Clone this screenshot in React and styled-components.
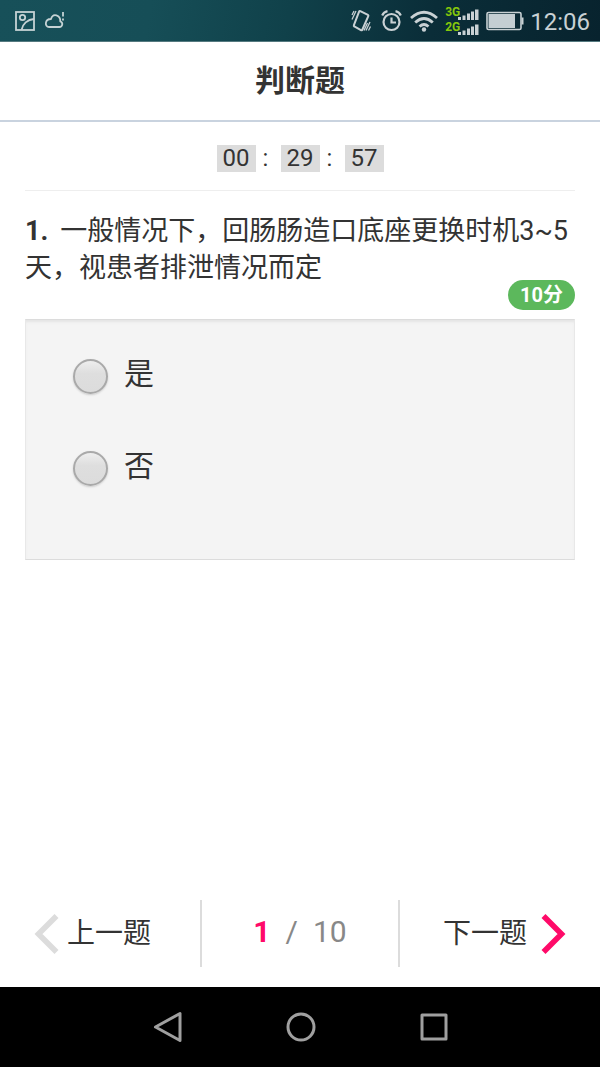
import { useState } from 'react';
import styled, { createGlobalStyle } from 'styled-components';

const GlobalStyle = createGlobalStyle`
  * {
    box-sizing: border-box;
  }

  body {
    margin: 0;
    background: #fff;
    color: #333;
    font-family: Roboto, 'Noto Sans CJK SC', sans-serif;
  }

  button, input {
    font-family: inherit;
  }
`;

const Screen = styled.div`
  display: flex;
  flex-direction: column;
  min-height: 100vh;
`;

const StatusBar = styled.div`
  display: flex;
  justify-content: space-between;
  align-items: center;
  height: 42px;
  padding: 0 10px 0 14px;
  border-bottom: 1px solid #557a80;
  background: linear-gradient(100deg, #175059 0%, #164e57 25%, #10414a 48%, #0a2d38 72%, #08232e 100%);
  color: #c9d1d4;
`;

const StatusGroup = styled.div`
  display: flex;
  align-items: center;
  gap: ${props => props.gap};
`;

const Clock = styled.time`
  font-size: 24px;
  line-height: 28px;
  padding-top: 2px;
`;

const Networks = styled.div`
  display: grid;
  grid-template-columns: 13px 22px;
  align-items: end;
`;

const NetworkName = styled.span`
  font-size: 12px;
  line-height: 12px;
  height: 15px;
  font-weight: 700;
  color: #86c80b;
`;

const Header = styled.header`
  height: 80px;
  border-bottom: 2px solid #c9d3df;
  text-align: center;
`;

const Title = styled.h1`
  margin: 0;
  font-size: 30px;
  line-height: 77px;
  font-weight: 700;
`;

const Main = styled.main`
  flex: 1;
  padding: 0 25px;
`;

const Timer = styled.div`
  display: flex;
  justify-content: center;
  height: 69px;
  padding-top: 23px;
  border-bottom: 1px solid #eee;
  font-size: 24px;
  line-height: 26px;
`;

const Digits = styled.span`
  width: 39px;
  height: 27px;
  background: #dcdcdc;
  text-align: center;
`;

const Colon = styled.span`
  width: 25px;
  padding-right: 5px;
  text-align: center;
`;

const Question = styled.div`
  position: relative;
  padding: 22px 0 32px;
`;

const QuestionText = styled.p`
  margin: 0;
  font-size: 27px;
  line-height: 37px;
`;

const Number = styled.b`
  margin-right: 12px;
`;

const Score = styled.span`
  position: absolute;
  right: 0;
  bottom: 9px;
  height: 30px;
  padding: 0 12px;
  border-radius: 15px;
  background: #5cb85c;
  color: #fff;
  font-size: 20px;
  line-height: 30px;
  font-weight: 700;
`;

const Options = styled.fieldset`
  display: flex;
  flex-direction: column;
  gap: 48px;
  margin: 0;
  padding: 32px 47px 71px;
  border: 1px solid #e8e8e8;
  border-top-color: #dcdcdc;
  border-bottom-color: #dcdcdc;
  background: #f4f4f4;
  box-shadow: inset 0 3px 3px -1px #e4e4e4;
`;

const Option = styled.label`
  display: flex;
  align-items: center;
  gap: 16px;
  height: 44px;
  font-size: 30px;
  line-height: 40px;
  cursor: pointer;
`;

const Radio = styled.input`
  appearance: none;
  width: 35px;
  height: 35px;
  margin: 4px 0 0;
  border: 2px solid #a9a9a9;
  border-radius: 50%;
  background: linear-gradient(#eee 0%, #dedede 40%, #dcdcdc 100%);
  box-shadow: 0 1px 2px #ccc;

  &:checked {
    background: radial-gradient(#ff0a69 35%, #dedede 40%);
  }
`;

const Pager = styled.nav`
  display: grid;
  grid-template-columns: 1fr 1fr 1fr;
  height: 67px;
  margin-bottom: 20px;
`;

const PagerButton = styled.button`
  display: flex;
  align-items: center;
  justify-content: ${props => props.side};
  gap: ${props => props.gap};
  padding: 0 34px;
  border: 0;
  background: none;
  color: #333;
  font-size: 28px;
  line-height: 40px;
  white-space: nowrap;
  cursor: pointer;
`;

const Counter = styled.div`
  display: flex;
  justify-content: center;
  gap: 15px;
  border: solid #dcdcdc;
  border-width: 0 2px;
  color: #888;
  font-size: 30px;
  line-height: 63px;
`;

const Current = styled.b`
  color: #ff0a69;
`;

const SystemNav = styled.div`
  display: flex;
  justify-content: center;
  align-items: center;
  gap: 101px;
  height: 80px;
  padding-left: 2px;
  background: #000;
`;

const SystemButton = styled.button`
  display: flex;
  padding: 0;
  border: 0;
  background: none;
  cursor: pointer;
`;

const Signal = () => (
  <svg width="21" height="13" viewBox="0 0 21 13" fill="#c9d1d4">
    <rect x="0" y="9" width="3" height="3" />
    <rect x="4.5" y="7.5" width="3" height="4.5" />
    <rect x="9" y="5.5" width="3" height="6.5" />
    <rect x="13" y="3.5" width="3" height="8.5" />
    <rect x="17" y="1.5" width="3.5" height="10.5" />
  </svg>
);

const PictureIcon = () => (
  <svg width="22" height="22" viewBox="0 0 22 22" fill="none" stroke="#c5d2d4" strokeWidth="1.8">
    <rect x="2" y="2" width="18" height="18" />
    <circle cx="8.5" cy="7.5" r="2.7" />
    <path d="M7.5 20c1-6 6-10.5 12.5-11" />
  </svg>
);

const WeatherIcon = () => (
  <svg width="22" height="22" viewBox="0 0 22 22" fill="none" stroke="#c5d2d4" strokeWidth="1.8">
    <path d="M5 17h10.500c3 0 4-4.500.8-5.500C16.500 5 9 2.500 7 9 .5 9 .5 17 5 17z" strokeLinejoin="round" />
    <path d="M19 2v4.500M19 8.500v2" />
  </svg>
);

const VibrateIcon = () => (
  <svg width="24" height="24" viewBox="0 0 24 24" fill="none" stroke="#c9d1d4" strokeWidth="2">
    <path d="M9.300 2.200l7.600 3.600q.8.500.4 1.400l-6 13.500q-.5 1-1.400.5L3.300 17.500q-.8-.4-.4-1.400L8 2.800q.4-.9 1.300-.6z" />
    <path d="M1 10.500L5 2M1 6L3 2M15 21.500L19 13M17.500 21.500L19.500 17.500M13 21.500l3.500-7.500" strokeWidth="1.3" />
  </svg>
);

const AlarmIcon = () => (
  <svg width="22" height="24" viewBox="0 0 22 24" fill="none" stroke="#c9d1d4" strokeWidth="2.2">
    <circle cx="10.500" cy="13" r="8" />
    <path d="M10.500 8.500v5h4.500M1.200 6.500C2 4.500 4 2.700 6.500 2.200M19.800 6.500c-.8-2-2.800-3.800-5.300-4.300" />
  </svg>
);

const WifiIcon = () => (
  <svg width="30" height="24" viewBox="0 0 30 24" fill="none" stroke="#c9d1d4" strokeWidth="2.8">
    <path d="M2 9q13-11.500 26 0M6.200 13.500q8.800-8 17.600 0M10.500 17.500q4.500-4 9 0" />
    <circle cx="15" cy="20.500" r="2.2" fill="#c9d1d4" stroke="none" />
  </svg>
);

const BatteryIcon = () => (
  <svg width="38" height="20" viewBox="0 0 38 20">
    <rect x="1" y="1.500" width="34" height="17" rx="1.500" fill="none" stroke="#c9d1d4" strokeWidth="1.600" />
    <rect x="2.500" y="3" width="26.500" height="14" fill="#c4ced2" />
    <rect x="35.500" y="6.500" width="2" height="7" fill="#c9d1d4" />
  </svg>
);

const Chevron = ({ color, d }) => (
  <svg width="25" height="42" viewBox="0 0 25 42" fill="none" stroke={color} strokeWidth="5.600">
    <path d={d} />
  </svg>
);

const OPTIONS = ['是', '否'];

export default () => {
  const [answer, setAnswer] = useState(null);

  return (
    <Screen>
      <GlobalStyle />
      <StatusBar>
        <StatusGroup gap="8px">
          <PictureIcon />
          <WeatherIcon />
        </StatusGroup>
        <StatusGroup gap="6px">
          <VibrateIcon />
          <AlarmIcon />
          <WifiIcon />
          <Networks>
            <NetworkName>3G</NetworkName>
            <Signal />
            <NetworkName>2G</NetworkName>
            <Signal />
          </Networks>
          <BatteryIcon />
          <Clock>12:06</Clock>
        </StatusGroup>
      </StatusBar>
      <Header>
        <Title>判断题</Title>
      </Header>
      <Main>
        <Timer role="timer">
          <Digits>00</Digits>
          <Colon>:</Colon>
          <Digits>29</Digits>
          <Colon>:</Colon>
          <Digits>57</Digits>
        </Timer>
        <Question>
          <QuestionText id="question">
            <Number>1.</Number>
            一般情况下，回肠肠造口底座更换时机3~5天，视患者排泄情况而定
          </QuestionText>
          <Score>10分</Score>
        </Question>
        <Options aria-labelledby="question">
          {OPTIONS.map(option => (
            <Option key={option}>
              <Radio
                type="radio"
                name="answer"
                value={option}
                checked={answer === option}
                onChange={() => setAnswer(option)}
              />
              {option}
            </Option>
          ))}
        </Options>
      </Main>
      <Pager>
        <PagerButton type="button" side="flex-start" gap="8px">
          <Chevron color="#dcdcdc" d="M22.500 3L4.500 21l18 18" />
          上一题
        </PagerButton>
        <Counter>
          <Current>1</Current>
          <span>/</span>
          <span>10</span>
        </Counter>
        <PagerButton type="button" side="flex-end" gap="14px">
          下一题
          <Chevron color="#ff0a69" d="M2.500 3l18 18-18 18" />
        </PagerButton>
      </Pager>
      <SystemNav>
        <SystemButton type="button" aria-label="Back">
          <svg width="32" height="32" viewBox="0 0 32 32" fill="none" stroke="#a0a0a0" strokeWidth="3" strokeLinejoin="round">
            <path d="M28 2.500v27L3.500 16z" />
          </svg>
        </SystemButton>
        <SystemButton type="button" aria-label="Home">
          <svg width="32" height="32" viewBox="0 0 32 32" fill="none" stroke="#a0a0a0" strokeWidth="3">
            <circle cx="16" cy="16" r="13" />
          </svg>
        </SystemButton>
        <SystemButton type="button" aria-label="Recent apps">
          <svg width="32" height="32" viewBox="0 0 32 32" fill="none" stroke="#a0a0a0" strokeWidth="3" strokeLinejoin="round">
            <rect x="4" y="4" width="24" height="24" />
          </svg>
        </SystemButton>
      </SystemNav>
    </Screen>
  );
};
